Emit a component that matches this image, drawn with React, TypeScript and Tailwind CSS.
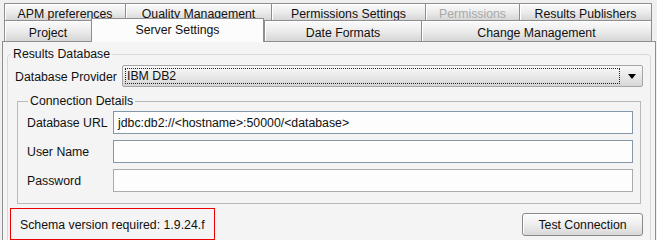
import React from 'react';

type TabProps = { label: string; w: string; disabled?: boolean; last?: boolean };

const Tab: React.FC<TabProps> = ({ label, w, disabled, last }) => (
  <div
    className={`${w} h-full shrink-0 flex items-center justify-center pt-[3px] border-l border-t border-[#8e8e8e] ${last ? 'border-r' : ''} bg-linear-to-b from-[#fbfbfb] via-[#ececec] to-[#d6d6d6] shadow-[inset_1px_1px_0_#ffffff] ${disabled ? 'text-[#a8a8a8]' : 'text-[#111]'}`}
  >
    {label}
  </div>
);

const Field: React.FC<{ label: string; value?: string; border: string }> = ({ label, value, border }) => (
  <div className="flex items-center">
    <span className="w-[86px] shrink-0 pt-[1px]">{label}</span>
    <div className={`w-[520px] h-[23px] border ${border} bg-[#fcfdfc] flex items-center pl-[4px]`}>{value}</div>
  </div>
);

const App: React.FC = () => {
  return (
    <div className="w-[657px] h-[240px] overflow-hidden bg-[#f0f0f0] pl-[2px] text-[12.3px] leading-[14px] text-[#111] font-['Liberation_Sans',Arial,sans-serif]">
      {/* Tab rows */}
      <div className="ml-[2px] mt-[3px]">
        <div className="flex h-[17px]">
          <Tab label="APM preferences" w="w-[121px]" />
          <Tab label="Quality Management" w="w-[146px]" />
          <Tab label="Permissions Settings" w="w-[154px]" />
          <Tab label="Permissions" w="w-[94px]" disabled />
          <Tab label="Results Publishers" w="w-[133px]" last />
        </div>
        <div className="flex items-start h-[21px]">
          <Tab label="Project" w="w-[87px]" />
          <div className="relative z-10 w-[173px] h-[24px] -mt-[2px] shrink-0 flex items-center justify-center pb-[1px] border-l border-t border-r border-[#8e8e8e] bg-[#fcfcfc]">
            Server Settings
          </div>
          <Tab label="Date Formats" w="w-[157px]" />
          <Tab label="Change Management" w="w-[231px]" last />
        </div>
      </div>

      {/* Content panel */}
      <div className="w-[654px] h-[210px] border border-[#8e8e8e] bg-[#f4f4f4]">
        <fieldset className="ml-[4px] mr-[4px] mt-[5px] pb-[30px] border border-[#d8d8d8] rounded-[4px]">
          <legend className="ml-[3px] px-[2px] leading-[15px]">Results Database</legend>

          <div className="flex items-center pl-[7px] mt-[3px]">
            <span className="w-[107px] shrink-0 pt-[1px]">Database Provider</span>
            <div className="w-[521px] h-[22px] border border-[#a5a5a5] rounded-[2px] bg-linear-to-b from-[#f8f8f8] via-[#e9e9e9] to-[#d6d6d6] flex items-center p-[2px]">
              <div className="flex-1 h-full border border-dotted border-[#222] flex items-center pl-[1px]">IBM DB2</div>
              <div className="w-[20px] flex justify-center pl-[3px]">
                <svg width="8" height="5" viewBox="0 0 8 5">
                  <path d="M0 0h8L4 5z" fill="#000" />
                </svg>
              </div>
            </div>
          </div>

          <fieldset className="ml-[9px] mt-[7px] w-[624px] pl-[9px] pr-[7px] pb-[11px] border border-[#b9b9b9]">
            <legend className="ml-[1px] px-[2px] leading-[15px]">Connection Details</legend>
            <div className="flex flex-col gap-[6px] mt-[2px]">
              <Field label="Database URL" value="jdbc:db2://<hostname>:50000/<database>" border="border-[#8496aa]" />
              <Field label="User Name" border="border-[#8496aa]" />
              <Field label="Password" border="border-[#ababab]" />
            </div>
          </fieldset>

          <div className="flex items-center justify-between pl-[2px] pr-[7px] mt-[4px]">
            <div className="w-[205px] h-[32px] border border-[#ee0000] flex items-center pl-[9px] pt-[1px]">
              Schema version required: 1.9.24.f
            </div>
            <button className="w-[121px] h-[23px] border border-[#8a8a8a] rounded-[3px] bg-linear-to-b from-[#fdfdfd] via-[#eeeeee] to-[#d8d8d8] shadow-[inset_1px_1px_0_#ffffff] text-[#111] pt-[1px]">
              Test Connection
            </button>
          </div>
        </fieldset>
      </div>
    </div>
  );
};

export default App;
